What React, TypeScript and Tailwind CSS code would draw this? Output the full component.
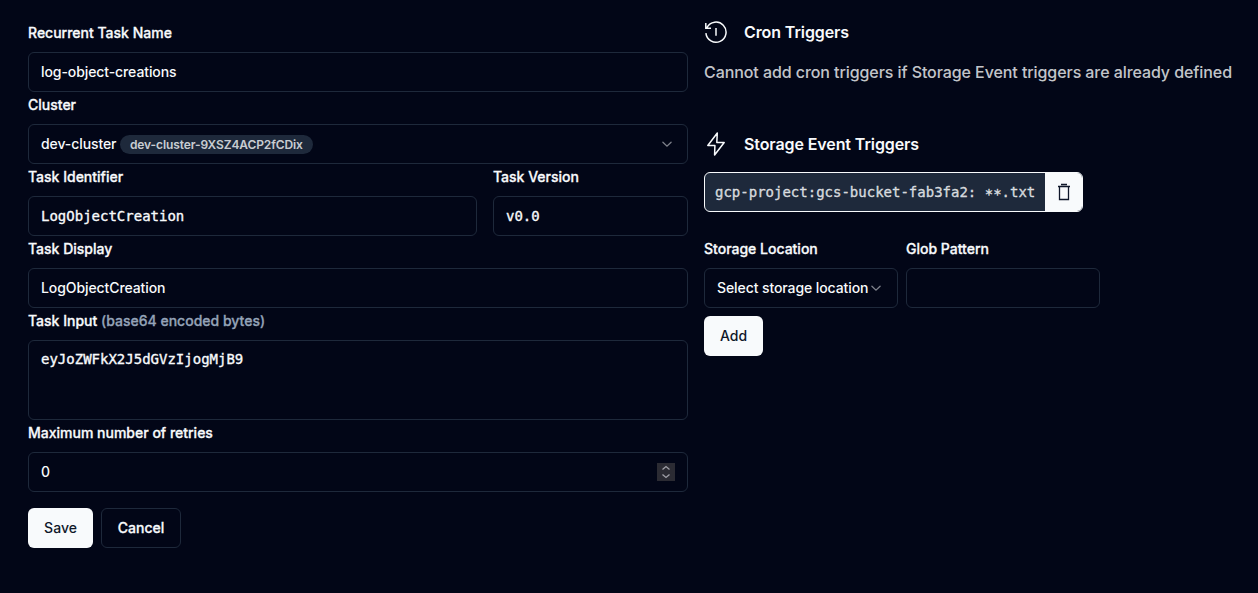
import type { ReactNode } from "react";

const box = "flex h-10 items-center rounded-md border border-[#1e293b] px-3 text-sm tracking-[-0.09px]";
const mono = "font-['DejaVu_Sans_Mono',monospace] tracking-normal [-webkit-text-stroke:0.35px]";

function Chevron() {
  return (
    <svg viewBox="0 0 16 16" className="size-4 shrink-0 opacity-50" fill="none" stroke="currentColor" strokeWidth="1.3" strokeLinecap="round">
      <path d="m3.9 6.2 4.1 4 4.1-4" />
    </svg>
  );
}

function Field({ label, className = "", children }: { label: ReactNode; className?: string; children: ReactNode }) {
  return (
    <div className={className}>
      <div className="flex h-8 items-center pb-1.5 text-sm leading-5 [-webkit-text-stroke:0.3px]">
        <span>{label}</span>
      </div>
      {children}
    </div>
  );
}

export default function App() {
  return (
    <div className="flex min-h-[593px] gap-4 bg-[#020617] pt-5 pl-7 font-['Inter',sans-serif] font-medium text-[#f8fafc]">
      <form className="w-[660px] shrink-0">
        <Field label="Recurrent Task Name">
          <div className={box}>log-object-creations</div>
        </Field>
        <Field label="Cluster">
          <div className={`${box} justify-between`}>
            <div className="flex items-center gap-1">
              <span>dev-cluster</span>
              <span className="flex h-[19px] w-[193px] items-center rounded-full bg-[#1e293b] px-[9.5px] pt-px text-xs font-semibold tracking-[-0.1px] text-[#f8fafc]/80">dev-cluster-9XSZ4ACP2fCDix</span>
            </div>
            <Chevron />
          </div>
        </Field>
        <div className="flex gap-4">
          <Field label="Task Identifier" className="w-[449px]">
            <div className="flex h-10 items-center rounded-md border border-[#1e293b] px-3 text-sm">
              <span className={mono}>LogObjectCreation</span>
            </div>
          </Field>
          <Field label="Task Version" className="w-[195px]">
            <div className="flex h-10 items-center rounded-md border border-[#1e293b] px-3 text-sm">
              <span className={mono}>v0.0</span>
            </div>
          </Field>
        </div>
        <Field label="Task Display">
          <div className={box}>LogObjectCreation</div>
        </Field>
        <Field label={<>Task Input <span className="text-[#94a3b8]">(base64 encoded bytes)</span></>}>
          <div className={`h-20 rounded-md border border-[#1e293b] px-3 py-2 text-sm ${mono}`}>eyJoZWFkX2J5dGVzIjogMjB9</div>
        </Field>
        <Field label="Maximum number of retries">
          <div className={`${box} justify-between`}>
            <span>0</span>
            <svg viewBox="0 0 18 18" className="size-[18px]" fill="none">
              <path d="M0 0h18v18H0z" fill="#2b2b33" />
              <path d="m5.5 6.5 3.5-3 3.5 3m-7 5 3.5 3 3.5-3" stroke="#a0a0a8" strokeWidth="1.3" />
            </svg>
          </div>
        </Field>
        <div className="mt-4 flex gap-2 text-sm">
          <button type="button" className="h-10 w-[65px] rounded-md bg-[#f8fafc] text-[#0f172a]">Save</button>
          <button type="button" className="h-10 w-20 rounded-md border border-[#1e293b] [-webkit-text-stroke:0.3px]">Cancel</button>
        </div>
      </form>
      <section className="w-[540px] shrink-0">
        <h2 className="flex h-6 items-center gap-4 font-semibold tracking-[-0.1px]">
          <svg viewBox="0 0 24 24" className="size-6" fill="none" stroke="currentColor" strokeWidth="1.5">
            <path d="M1.9 13.2A10.1 10.1 0 1 0 3 7.5M1.8 3v5.2H7" />
            <path d="M12 8v7.8" />
          </svg>
          Cron Triggers
        </h2>
        <p className="mt-4 leading-6 tracking-[-0.077px] text-[#f8fafc]/80">Cannot add cron triggers if Storage Event triggers are already defined</p>
        <h2 className="mt-12 flex h-6 items-center gap-4 font-semibold tracking-[-0.1px]">
          <svg viewBox="0 0 24 24" className="size-6" fill="none" stroke="currentColor" strokeWidth="1.5" strokeLinejoin="round">
            <path d="M13.3 1 3.8 13.5h7.1L10.6 23l9.6-12.5h-7.4z" />
          </svg>
          Storage Event Triggers
        </h2>
        <div className="mt-4 flex h-10 w-[379px] overflow-hidden rounded-md border border-[#f8fafc] bg-[#1e293b] text-sm">
          <span className={`flex w-[340px] items-center pl-2.5 whitespace-pre text-[#f8fafc]/80 ${mono}`}>
            {"gcp-project:gcs-bucket-fab3fa2: "}
            <span className="pt-1">**</span>
            .txt
          </span>
          <button type="button" className="flex flex-1 items-center justify-center bg-[#f8fafc] text-[#0f172a]">
            <svg viewBox="0 0 16 18" className="h-[18px] w-4" fill="none" stroke="currentColor" strokeWidth="1.3">
              <path d="M2 3.5h12M5 1.5h6M3.5 4v12.5h9V4" />
            </svg>
          </button>
        </div>
        <div className="mt-6 flex gap-2">
          <Field label="Storage Location" className="w-[194px]">
            <div className={`${box} whitespace-nowrap`}>Select storage location<Chevron /></div>
          </Field>
          <Field label="Glob Pattern" className="w-[194px]">
            <div className={box} />
          </Field>
        </div>
        <button type="button" className="mt-2 h-10 w-[59px] rounded-md bg-[#f8fafc] text-sm text-[#0f172a]">Add</button>
      </section>
    </div>
  );
}
